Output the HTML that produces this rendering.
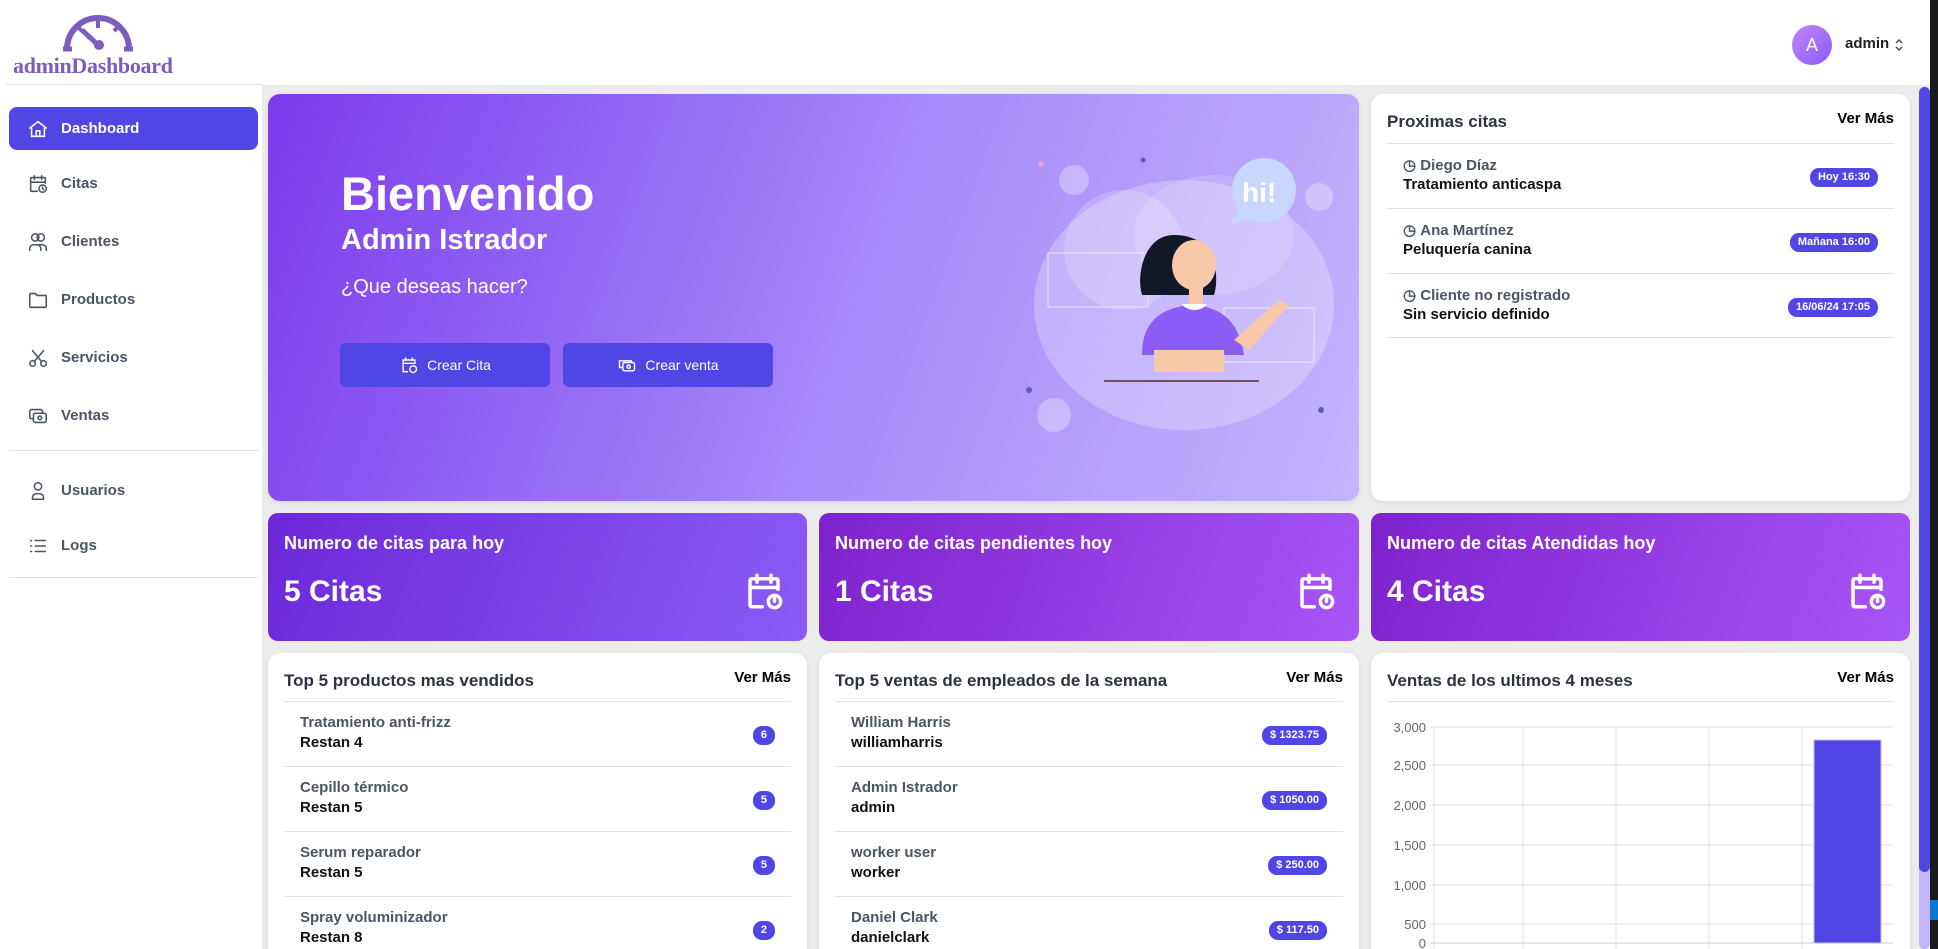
<!DOCTYPE html>
<html style="overflow:hidden;height:949px"><head><meta charset="utf-8"><style>
*{box-sizing:border-box;margin:0;padding:0}
body{width:1938px;height:949px;overflow:hidden;background:#ececec;font-family:"Liberation Sans",sans-serif;position:relative}
.abs{position:absolute}
#hdr{left:0;top:0;width:1930px;height:85px;background:#fff}
#side{left:0;top:85px;width:262px;height:864px;background:#fff}
.nav{position:absolute;left:9px;width:249px;height:43px;display:flex;align-items:center;padding-left:18px;font-size:15px;font-weight:bold;color:#4b5563}
.nav svg{width:22px;height:22px;margin-right:12px;fill:none;stroke:#4b5563;stroke-width:1.7;stroke-linecap:round;stroke-linejoin:round}
.nav.act{background:#4f46e5;color:#fff;border-radius:8px}
.nav.act svg{stroke:#fff}
.hr{position:absolute;height:1px;background:#e2e2e2}
.card{position:absolute;background:#fff;border-radius:12px;box-shadow:0 2px 6px rgba(0,0,0,.08)}
.ttl{position:absolute;left:16px;font-size:17px;font-weight:bold;color:#2d3340}
.ver{position:absolute;right:16px;font-size:15px;font-weight:bold;color:#000}
.row{position:absolute;left:16px;right:16px;height:65px;border-top:1px solid #e3e3e3}
.row .n{position:absolute;left:16px;top:12px;font-size:15px;font-weight:bold;color:#4b5563}
.row .s{position:absolute;left:16px;top:32px;font-size:15px;font-weight:bold;color:#111}
.bdg{position:absolute;right:16px;top:24px;background:#4f46e5;color:#fff;font-size:11px;font-weight:bold;border-radius:9px;height:19px;line-height:19px;padding:0 8px}
.stat{position:absolute;top:513px;height:128px;border-radius:10px;color:#fff}
.stat .t{position:absolute;left:16px;top:20px;font-size:18px;font-weight:bold}
.stat .v{position:absolute;left:16px;top:62px;font-size:30px;font-weight:bold}
.stat svg{position:absolute;right:22px;top:56px;width:42px;height:44px;fill:none;stroke:#fff;stroke-width:2;stroke-linecap:round;stroke-linejoin:round}
.btn{position:absolute;top:343px;width:210px;height:44px;background:#4f46e5;border-radius:6px;color:#fff;font-size:14px;display:flex;align-items:center;justify-content:center;gap:8px}
.btn svg{width:20px;height:20px;fill:none;stroke:#fff;stroke-width:1.7}
</style></head><body>
<div id="hdr" class="abs">
 <svg class="abs" style="left:60px;top:14px" width="76" height="40" viewBox="0 0 76 40"><path d="M7 35 A31 31 0 1 1 69 35" fill="none" stroke="#7c5cbf" stroke-width="6"/><path d="M3 35h9M64 35h9" stroke="#7c5cbf" stroke-width="5"/><path d="M38 4v10M16 11l6 6M60 11l-6 6" stroke="#7c5cbf" stroke-width="4"/><path d="M22 16L38 31" stroke="#7c5cbf" stroke-width="5"/><circle cx="39" cy="31" r="5" fill="#7c5cbf"/></svg>
 <div class="abs" style="left:13px;top:53px;font-family:'Liberation Serif',serif;font-weight:bold;font-size:22px;color:#7c5cbf;letter-spacing:-0.3px">adminDashboard</div>
 <div class="abs" style="left:1792px;top:25px;width:40px;height:40px;border-radius:50%;background:linear-gradient(135deg,#c084fc,#8b5cf6);color:#fff;font-size:18px;text-align:center;line-height:40px">A</div>
 <div class="abs" style="left:1845px;top:35px;font-size:15px;font-weight:bold;color:#222">admin</div>
 <svg class="abs" style="left:1894px;top:37px" width="10" height="16" viewBox="0 0 10 16"><path d="M2 6l3-3 3 3M2 10l3 3 3-3" fill="none" stroke="#444" stroke-width="1.4"/></svg>
</div>
<div class="abs" style="left:1930px;top:0;width:8px;height:949px;background:#1a1a1a"></div>
<div class="abs" style="left:1919px;top:87px;width:11px;height:862px;background:#c4b5fd;border-radius:6px"></div>
<div class="abs" style="left:1919px;top:87px;width:11px;height:785px;background:#4f46e5;border-radius:6px"></div>
<div class="abs" style="left:1930px;top:900px;width:8px;height:20px;background:#0a7bd5"></div>
<div id="side" class="abs"></div>
<div class="hr" style="left:5px;top:84px;width:257px"></div>
<div class="nav act" style="top:107px"><svg viewBox="0 0 24 24"><path d="M3 11l9-7 9 7M5 9.5V20h14V9.5M10 20v-6h4v6"/></svg>Dashboard</div>
<div class="nav" style="top:162px"><svg viewBox="0 0 24 24"><path d="M11 20H5a1 1 0 0 1-1-1V6a1 1 0 0 1 1-1h14a1 1 0 0 1 1 1v5M16 3v4M8 3v4M4 10h16"/><circle cx="17" cy="17" r="4"/><path d="M17 15.5V17l1 1"/></svg>Citas</div>
<div class="nav" style="top:220px"><svg viewBox="0 0 24 24"><circle cx="9" cy="7" r="4"/><circle cx="15" cy="7" r="4"/><path d="M3 21v-2a4 4 0 0 1 4-4h4a4 4 0 0 1 4 4v2M13 15h4a4 4 0 0 1 4 4v2"/></svg>Clientes</div>
<div class="nav" style="top:278px"><svg viewBox="0 0 24 24"><path d="M3 6a1 1 0 0 1 1-1h5l2 2h9a1 1 0 0 1 1 1v11a1 1 0 0 1-1 1H4a1 1 0 0 1-1-1z"/></svg>Productos</div>
<div class="nav" style="top:336px"><svg viewBox="0 0 24 24"><circle cx="6" cy="18" r="3"/><circle cx="18" cy="18" r="3"/><path d="M8 16L18 4M16 16L6 4"/></svg>Servicios</div>
<div class="nav" style="top:394px"><svg viewBox="0 0 24 24"><rect x="7" y="9" width="14" height="10" rx="2"/><circle cx="14" cy="14" r="2"/><path d="M17 9V7a2 2 0 0 0-2-2H5a2 2 0 0 0-2 2v6a2 2 0 0 0 2 2h2"/></svg>Ventas</div>
<div class="hr" style="left:9px;top:450px;width:249px"></div>
<div class="nav" style="top:469px"><svg viewBox="0 0 24 24"><circle cx="12" cy="7" r="4"/><path d="M6 21v-2a4 4 0 0 1 4-4h4a4 4 0 0 1 4 4v2z"/></svg>Usuarios</div>
<div class="nav" style="top:524px"><svg viewBox="0 0 24 24"><path d="M9 6h11M9 12h11M9 18h11M4 6h1M4 12h1M4 18h1"/></svg>Logs</div>
<div class="hr" style="left:9px;top:577px;width:249px"></div>

<!-- hero -->
<div class="card" style="left:268px;top:94px;width:1091px;height:407px;background:linear-gradient(110deg,#7c3aed 0%,#a78bfa 55%,#c4b5fd 100%);overflow:hidden">
 <div class="abs" style="left:73px;top:72px;font-size:47px;font-weight:bold;color:#fff">Bienvenido</div>
 <div class="abs" style="left:73px;top:130px;font-size:29px;font-weight:bold;color:#fff">Admin Istrador</div>
 <div class="abs" style="left:73px;top:182px;font-size:20px;color:#fff">¿Que deseas hacer?</div>
 <svg class="abs" style="left:736px;top:46px" width="360" height="310" viewBox="0 0 360 310">
  <ellipse cx="180" cy="165" rx="150" ry="125" fill="#fff" opacity=".25"/>
  <ellipse cx="120" cy="110" rx="60" ry="60" fill="#fff" opacity=".2"/>
  <ellipse cx="210" cy="95" rx="80" ry="60" fill="#fff" opacity=".15"/>
  <ellipse cx="70" cy="40" rx="15" ry="15" fill="#fff" opacity=".3"/>
  <circle cx="50" cy="275" r="17" fill="#fff" opacity=".3"/>
  <circle cx="315" cy="57" r="14" fill="#fff" opacity=".3"/>
  <circle cx="260" cy="50" r="32" fill="#c7d7fe"/>
  <path d="M235 70l-10 15 25-8z" fill="#c7d7fe"/>
  <text x="238" y="62" font-family="Liberation Sans" font-weight="bold" font-size="28" fill="#fff">hi!</text>
  <rect x="44" y="113" width="100" height="54" fill="none" stroke="#fff" opacity=".6"/>
  <rect x="220" y="168" width="90" height="54" fill="none" stroke="#fff" opacity=".6"/>
  <circle cx="37" cy="24" r="3" fill="#e8a0c0"/><circle cx="25" cy="250" r="3" fill="#5b5fb0"/><circle cx="317" cy="270" r="3" fill="#5b5fb0"/><circle cx="139" cy="20" r="2.5" fill="#5b5fb0"/>
  <path d="M170 95c-30 0-38 40-32 60h72c5-15 5-60-40-60z" fill="#111827"/>
  <ellipse cx="190" cy="125" rx="22" ry="25" fill="#f8c8a8"/>
  <path d="M185 148h14v18h-14z" fill="#f8c8a8"/>
  <path d="M138 215c0-30 15-48 52-50 30 3 45 18 50 50z" fill="#8b5cf6"/>
  <path d="M150 210h70v22h-70z" fill="#f8c8a8"/>
  <path d="M230 200l45-40 10 5-40 45z" fill="#f8c8a8"/>
  <path d="M178 164c5 8 20 8 25 0" fill="#fff"/>
  <path d="M100 241h155" stroke="#5b2b1b" stroke-width="1.5"/>
 </svg>
 <div class="btn" style="left:72px;top:249px"><svg viewBox="0 0 24 24"><path d="M11 20H5V6h14v5M16 3v4M8 3v4M4 10h16"/><circle cx="17" cy="17" r="4"/></svg>Crear Cita</div>
 <div class="btn" style="left:295px;top:249px"><svg viewBox="0 0 24 24"><rect x="7" y="9" width="14" height="10" rx="2"/><circle cx="14" cy="14" r="2"/><path d="M17 9V7H3v8h4"/></svg>Crear venta</div>
</div>

<!-- proximas -->
<div class="card" style="left:1371px;top:94px;width:539px;height:407px">
 <div class="ttl" style="top:18px">Proximas citas</div><div class="ver" style="top:16px">Ver Más</div>
 <div class="row" style="top:49px"><div class="n">&#9719;&nbsp;Diego Díaz</div><div class="s">Tratamiento anticaspa</div><div class="bdg">Hoy 16:30</div></div>
 <div class="row" style="top:114px"><div class="n">&#9719;&nbsp;Ana Martínez</div><div class="s">Peluquería canina</div><div class="bdg">Mañana 16:00</div></div>
 <div class="row" style="top:179px;border-bottom:1px solid #e3e3e3"><div class="n">&#9719;&nbsp;Cliente no registrado</div><div class="s">Sin servicio definido</div><div class="bdg">16/06/24 17:05</div></div>
</div>

<!-- stats -->
<div class="stat" style="left:268px;width:539px;background:linear-gradient(110deg,#6d28d9,#8b5cf6)"><div class="t">Numero de citas para hoy</div><div class="v">5 Citas</div><svg viewBox="0 0 24 24"><path d="M11 21H5a1 1 0 0 1-1-1V6a1 1 0 0 1 1-1h14a1 1 0 0 1 1 1v5M16 3v4M8 3v4M4 10h16"/><circle cx="18" cy="18" r="3.5"/><path d="M18 16.5V18"/></svg></div>
<div class="stat" style="left:819px;width:540px;background:linear-gradient(110deg,#7e22ce,#a855f7)"><div class="t">Numero de citas pendientes hoy</div><div class="v">1 Citas</div><svg viewBox="0 0 24 24"><path d="M11 21H5a1 1 0 0 1-1-1V6a1 1 0 0 1 1-1h14a1 1 0 0 1 1 1v5M16 3v4M8 3v4M4 10h16"/><circle cx="18" cy="18" r="3.5"/><path d="M18 16.5V18"/></svg></div>
<div class="stat" style="left:1371px;width:539px;background:linear-gradient(110deg,#7e22ce,#a855f7)"><div class="t">Numero de citas Atendidas hoy</div><div class="v">4 Citas</div><svg viewBox="0 0 24 24"><path d="M11 21H5a1 1 0 0 1-1-1V6a1 1 0 0 1 1-1h14a1 1 0 0 1 1 1v5M16 3v4M8 3v4M4 10h16"/><circle cx="18" cy="18" r="3.5"/><path d="M18 16.5V18"/></svg></div>

<!-- bottom -->
<div class="card" style="left:268px;top:653px;width:539px;height:296px;border-radius:12px 12px 0 0;overflow:hidden">
 <div class="ttl" style="top:18px">Top 5 productos mas vendidos</div><div class="ver" style="top:16px">Ver Más</div>
 <div class="row" style="top:48px"><div class="n">Tratamiento anti-frizz</div><div class="s">Restan 4</div><div class="bdg">6</div></div>
 <div class="row" style="top:113px"><div class="n">Cepillo térmico</div><div class="s">Restan 5</div><div class="bdg">5</div></div>
 <div class="row" style="top:178px"><div class="n">Serum reparador</div><div class="s">Restan 5</div><div class="bdg">5</div></div>
 <div class="row" style="top:243px"><div class="n">Spray voluminizador</div><div class="s">Restan 8</div><div class="bdg">2</div></div>
</div>
<div class="card" style="left:819px;top:653px;width:540px;height:296px;border-radius:12px 12px 0 0;overflow:hidden">
 <div class="ttl" style="top:18px">Top 5 ventas de empleados de la semana</div><div class="ver" style="top:16px">Ver Más</div>
 <div class="row" style="top:48px"><div class="n">William Harris</div><div class="s">williamharris</div><div class="bdg">$ 1323.75</div></div>
 <div class="row" style="top:113px"><div class="n">Admin Istrador</div><div class="s">admin</div><div class="bdg">$ 1050.00</div></div>
 <div class="row" style="top:178px"><div class="n">worker user</div><div class="s">worker</div><div class="bdg">$ 250.00</div></div>
 <div class="row" style="top:243px"><div class="n">Daniel Clark</div><div class="s">danielclark</div><div class="bdg">$ 117.50</div></div>
</div>
<div class="card" style="left:1371px;top:653px;width:539px;height:296px;border-radius:12px 12px 0 0">
 <div class="ttl" style="top:18px">Ventas de los ultimos 4 meses</div><div class="ver" style="top:16px">Ver Más</div>
 <div class="hr" style="left:16px;top:48px;width:507px"></div>
</div>
<svg class="abs" style="left:1380px;top:715px" width="530" height="234">
 <g stroke="#e2e2e2" stroke-width="1">
  <line x1="50" y1="12" x2="513" y2="12"/><line x1="50" y1="50" x2="513" y2="50"/><line x1="50" y1="90" x2="513" y2="90"/><line x1="50" y1="130" x2="513" y2="130"/><line x1="50" y1="170" x2="513" y2="170"/><line x1="50" y1="209" x2="513" y2="209"/><line x1="50" y1="228" x2="513" y2="228" stroke="#ccc"/>
  <line x1="54" y1="12" x2="54" y2="234"/><line x1="143" y1="12" x2="143" y2="234"/><line x1="236" y1="12" x2="236" y2="234"/><line x1="329" y1="12" x2="329" y2="234"/><line x1="422" y1="12" x2="422" y2="234"/>
 </g>
 <rect x="434" y="25" width="67" height="203" fill="#4f46e5" stroke="#c4b5fd"/>
 <g font-family="Liberation Sans" font-size="13" fill="#666" text-anchor="end">
  <text x="46" y="17">3,000</text><text x="46" y="55">2,500</text><text x="46" y="95">2,000</text><text x="46" y="135">1,500</text><text x="46" y="175">1,000</text><text x="46" y="214">500</text><text x="46" y="233">0</text>
 </g>
</svg>
</body></html>
